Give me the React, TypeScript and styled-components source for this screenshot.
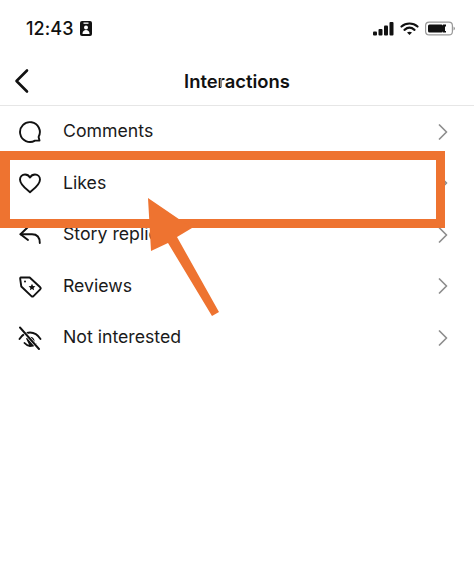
import React from "react";
import styled, { createGlobalStyle } from "styled-components";

const Global = createGlobalStyle`
  html, body { margin: 0; padding: 0; background: #fff; }
  body { font-family: Inter, "Liberation Sans", sans-serif; color: #111; }
`;
const Page = styled.div`
  position: relative;
  width: 474px;
  height: 561px;
  overflow: hidden;
  background: #fff;
`;
const StatusBar = styled.div`
  height: 57px;
  box-sizing: border-box;
  padding: 18px 19px 0 26px;
  display: flex;
  justify-content: space-between;
  align-items: flex-start;
`;
const TimeGroup = styled.div`
  display: flex;
  align-items: center;
  gap: 6px;
  height: 21px;
`;
const Time = styled.span`
  font-size: 18px;
  font-weight: 500;
  letter-spacing: 0.1px;
  line-height: 21px;
`;
const StatusIcons = styled.div`
  display: flex;
  align-items: center;
  gap: 6px;
  height: 21px;
`;
const Header = styled.header`
  position: relative;
  height: 49px;
  box-sizing: border-box;
  border-bottom: 1px solid #e6e6e6;
  display: flex;
  align-items: center;
  justify-content: center;
  padding-bottom: 1px;
`;
const BackButton = styled.div`
  position: absolute;
  left: 14px;
  top: 11px;
  display: flex;
`;
const Title = styled.h1`
  margin: 0;
  font-size: 18.4px;
  font-weight: 600;
  line-height: 24px;
`;
const CursorMark = styled.span`
  position: absolute;
  left: 220px;
  top: 22px;
  width: 2px;
  height: 8px;
  background: #8a8a8a;
`;
const List = styled.div`
  display: flex;
  flex-direction: column;
`;
const Row = styled.div`
  height: 51.5px;
  display: flex;
  align-items: center;
  padding: 0 26px 0 18px;
`;
const IconSlot = styled.div`
  width: 24px;
  height: 24px;
  margin-right: 21px;
  display: flex;
  color: #111;
`;
const Label = styled.span`
  flex: 1;
  font-size: 17.7px;
  line-height: 24px;
  margin-top: -1px;
  color: #1a1a1a;
`;
const Highlight = styled.div`
  position: absolute;
  left: 0;
  top: 151px;
  width: 445px;
  height: 77px;
  box-sizing: border-box;
  border: solid #ee7330;
  border-width: 9px 9px 9px 10px;
`;
const ArrowLayer = styled.svg`
  position: absolute;
  left: 140px;
  top: 190px;
`;

const Stroke = {
  fill: "none",
  stroke: "currentColor",
  strokeWidth: 1.9,
  strokeLinecap: "round" as const,
  strokeLinejoin: "round" as const,
};

const CommentIcon = () => (
  <svg width="24" height="24" viewBox="0 0 24 24" {...Stroke}>
    <path d="M21.5 20.5l-.9-3.6A9.900 9.900 0 1 0 17 20.600l4.500-.1z" />
  </svg>
);
const HeartIcon = () => (
  <svg width="24" height="24" viewBox="0 0 24 24" {...Stroke}>
    <path d="M12 21.200C8 18 2 14 2 8.600 2 5.500 4.300 3.500 7 3.500c2.200 0 3.900 1.100 5 3 1.100-1.900 2.800-3 5-3 2.700 0 5 2 5 5.100C22 14 16 18 12 21.200z" />
  </svg>
);
const ReplyIcon = () => (
  <svg width="24" height="24" viewBox="0 0 24 24" {...Stroke}>
    <path d="M10 4L2.500 11.200 10 17" />
    <path d="M2.500 11.200h11.500c5 0 7.800 3 7.800 8.800" />
  </svg>
);
const TagIcon = () => (
  <svg width="24" height="24" viewBox="0 0 24 24" {...Stroke}>
    <path d="M2.500 3.500h9.200l10.500 9.800a1.500 1.500 0 0 1 0 2.100l-6.700 6.700a1.500 1.500 0 0 1-2.100 0L3.300 12.500 2.200 4.800c-.1-.7.300-1.300.3-1.300z" />
    <circle cx="7" cy="7.500" r="1" fill="currentColor" stroke="none" />
    <path
      d="M14 9.800l1 2.200 2.400.3-1.800 1.600.5 2.400-2.100-1.200-2.100 1.200.5-2.400-1.800-1.600 2.400-.3z"
      fill="currentColor"
      stroke="none"
    />
  </svg>
);
const HiddenIcon = () => (
  <svg width="24" height="24" viewBox="0 0 24 24" {...Stroke}>
    <path d="M1.500 13C4 9 7.500 6.500 12 6.500S20 9 22.500 13" />
    <path d="M6.500 17A9 9 0 0 0 12 20c2 0 4-.6 5.500-2" />
    <path d="M8 12.500a4.800 4.800 0 0 1 8.500 3.500 4.500 4.500 0 0 1-5 3.500z" fill="currentColor" stroke="none" />
    <path d="M2.500 2l18.500 21" stroke="#fff" strokeWidth="3.400" />
    <path d="M2 1.500l19 21.500" />
  </svg>
);
const Chevron = () => (
  <svg width="10" height="16" viewBox="0 0 10 16" fill="none" stroke="#8e8e8e" strokeWidth="1.700" strokeLinecap="round" strokeLinejoin="round">
    <path d="M1.500 1L8.500 8 1.500 15" />
  </svg>
);

const rows = [
  { label: "Comments", Icon: CommentIcon },
  { label: "Likes", Icon: HeartIcon },
  { label: "Story replies", Icon: ReplyIcon },
  { label: "Reviews", Icon: TagIcon },
  { label: "Not interested", Icon: HiddenIcon },
];

export default function App() {
  return (
    <Page>
      <Global />
      <StatusBar>
        <TimeGroup>
          <Time>12:43</Time>
          <svg width="12" height="15" viewBox="0 0 12 15">
            <rect x="0" y="0" width="12" height="15" rx="2" fill="#111" />
            <rect x="3.500" y="1.500" width="5" height="1.300" fill="#fff" />
            <circle cx="6" cy="6.500" r="2" fill="#fff" />
            <path d="M2.500 13c0-3 1.500-4 3.500-4s3.500 1 3.500 4z" fill="#fff" />
          </svg>
        </TimeGroup>
        <StatusIcons>
          <svg width="21" height="14" viewBox="0 0 21 14" fill="#111">
            <rect x="0" y="9.500" width="4" height="4" rx="1" />
            <rect x="5.500" y="7" width="4" height="6.500" rx="1" />
            <rect x="11" y="3.500" width="4" height="10" rx="1" />
            <rect x="16.500" y="0" width="4" height="13.500" rx="1" />
          </svg>
          <svg width="19" height="14" viewBox="0 0 19 14" fill="none" stroke="#111" strokeWidth="2.200" strokeLinecap="round">
            <path d="M1.500 4.500C6 .5 13 .5 17.500 4.500" />
            <path d="M4.500 7.800c3-2.500 7-2.500 10 0" />
            <path d="M9.500 13l-2.500-2.500c1.500-1 3.500-1 5 0z" fill="#111" stroke="none" />
          </svg>
          <svg width="30" height="15" viewBox="0 0 30 15">
            <rect x="0.600" y="1.100" width="26.800" height="12.800" rx="3.500" fill="none" stroke="#999" strokeWidth="1.200" />
            <rect x="3" y="3.500" width="15" height="8" rx="1.500" fill="#111" />
            <rect x="18" y="3.500" width="3" height="8" fill="#111" />
            <rect x="20" y="5.500" width="1.300" height="4.500" fill="#fff" />
            <path d="M28.500 5.500c1 .5 1.500 1.200 1.500 2s-.5 1.500-1.500 2z" fill="#999" />
          </svg>
        </StatusIcons>
      </StatusBar>
      <Header>
        <BackButton>
          <svg width="16" height="26" viewBox="0 0 16 26" fill="none" stroke="#111" strokeWidth="2.600" strokeLinecap="round" strokeLinejoin="round">
            <path d="M13 2.500L2.500 13 13 23.500" />
          </svg>
        </BackButton>
        <Title>Interactions</Title>
        <CursorMark />
      </Header>
      <List>
        {rows.map(({ label, Icon }) => (
          <Row key={label}>
            <IconSlot>
              <Icon />
            </IconSlot>
            <Label>{label}</Label>
            <Chevron />
          </Row>
        ))}
      </List>
      <Highlight />
      <ArrowLayer width="90" height="135" viewBox="140 190 90 135">
        <path d="M168 243L212 316 219 312 177 237 192 228 148 198 151 251z" fill="#ee7330" />
      </ArrowLayer>
    </Page>
  );
}
